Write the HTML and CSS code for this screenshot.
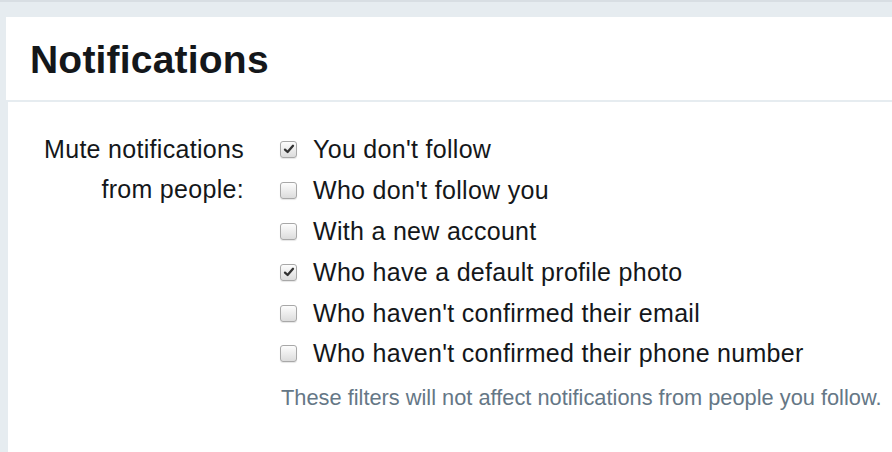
FILE: index.html
```html
<!DOCTYPE html>
<html>
<head>
<meta charset="utf-8">
<link rel="stylesheet" href="styles.css">
</head>
<body>
<div class="page">
  <div class="header">
    <h1 class="title">Notifications</h1>
  </div>
  <div class="content">
    <div class="label">Mute notifications<br>from people:</div>
    <div class="options">
      <label class="opt"><span class="box checked"><svg viewBox="0 0 16 16" width="16" height="16"><path d="M4 8.6 L6.6 11 L12 4.8" fill="none" stroke="#333" stroke-width="2.3" stroke-linecap="round" stroke-linejoin="round"/></svg></span>You don't follow</label>
      <label class="opt"><span class="box"></span>Who don't follow you</label>
      <label class="opt"><span class="box"></span>With a new account</label>
      <label class="opt"><span class="box checked"><svg viewBox="0 0 16 16" width="16" height="16"><path d="M4 8.6 L6.6 11 L12 4.8" fill="none" stroke="#333" stroke-width="2.3" stroke-linecap="round" stroke-linejoin="round"/></svg></span>Who have a default profile photo</label>
      <label class="opt"><span class="box"></span>Who haven't confirmed their email</label>
      <label class="opt"><span class="box"></span>Who haven't confirmed their phone number</label>
      <p class="help">These filters will not affect notifications from people you follow.</p>
    </div>
  </div>
</div>
</body>
</html>
```
FILE: styles.css
```css
html, body {
  margin: 0;
  padding: 0;
}
body {
  background: #e6ecf0;
  border-top: 2px solid #d8dee3;
  font-family: "Liberation Sans", Arial, Helvetica, sans-serif;
  color: #14171a;
  height: 450px;
  overflow: hidden;
}
.page {
  padding: 15px 0 0 6px;
}
.header {
  background: #fff;
  height: 83px;
  display: flex;
  align-items: center;
  padding-left: 24px;
  border-bottom: 2px solid #e6ecf0;
}
.title {
  margin: 0;
  font-size: 39px;
  font-weight: bold;
  color: #14171a;
  line-height: 1;
  padding-top: 2px;
  letter-spacing: 0.2px;
}
.content {
  margin-left: 2px;
  background: #fff;
  height: 347px;
  display: flex;
  padding-top: 27px;
}
.label {
  flex: none;
  width: 236px;
  text-align: right;
  font-size: 25px;
  letter-spacing: 0.3px;
  line-height: 40px;
  margin-right: 36px;
}
.options {
  display: flex;
  flex-direction: column;
}
.opt {
  display: flex;
  align-items: center;
  height: 40.9px;
  font-size: 25px;
  letter-spacing: 0.3px;
  white-space: nowrap;
}
.box {
  flex: none;
  width: 17px;
  height: 17px;
  box-sizing: border-box;
  border: 1px solid #a8a8a8;
  border-radius: 3px;
  background: linear-gradient(#fdfdfd, #dcdcdc);
  margin-right: 16px;
  position: relative;
  top: 0;
  box-shadow: 0 1px 1px rgba(0,0,0,0.1);
}
.box svg {
  position: absolute;
  left: -0.5px;
  top: -0.5px;
}
.help {
  margin: 11px 0 0 1px;
  font-size: 21.8px;
  color: #657786;
  white-space: nowrap;
}
```
